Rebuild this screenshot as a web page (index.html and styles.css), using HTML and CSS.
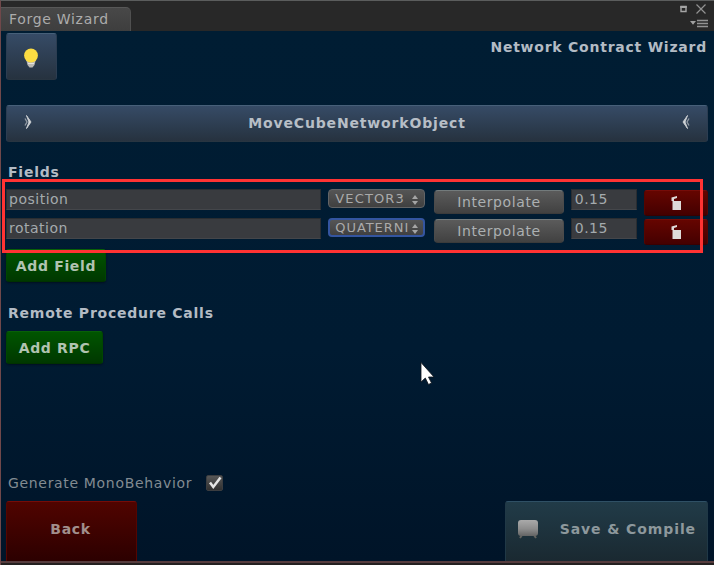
FILE: index.html
```html
<!DOCTYPE html>
<html lang="en">
<head>
<meta charset="utf-8">
<title>Forge Wizard</title>
<link rel="stylesheet" href="styles.css">
</head>
<body>
<div class="window">
  <header class="titlebar">
    <div class="tab"><span>Forge Wizard</span></div>
    <svg class="controls" width="30" height="28" viewBox="0 0 30 28" fill="none">
      <path d="M2 5.500h5v5H2z" stroke="#a5a5a5" stroke-width="1.4"/><path d="M1.300 6h6.400" stroke="#a5a5a5" stroke-width="2"/>
      <path d="M17.500 3.500l9 9m0-9l-9 9" stroke="#929292" stroke-width="1.2"/>
      <path d="M11 20h6l-3 3.700z" fill="#a0a0a0"/>
      <path d="M18 19.500h11M18 22.500h11M18 25.500h11" stroke="#929292" stroke-width="1.7"/>
    </svg>
  </header>
  <main class="content">
    <div class="top">
      <button class="btn blue bulb">
        <svg width="20" height="24" viewBox="0 0 20 24">
          <path d="M4.500 11h11l-2 8-2 2.500h-3l-2-2.500z" fill="#b9b8b4"/>
          <path d="M7 17.500h6" stroke="#e5e4de"/>
          <circle cx="10" cy="9.500" r="6.900" fill="#fbdc42"/>
        </svg>
      </button>
      <h1>Network Contract Wizard</h1>
    </div>
    <button class="btn blue name">
      <svg width="10" height="16" viewBox="0 0 10 16" fill="none"><path d="M3.500 1.500L8 8L3.500 14.500L6 8z" fill="#d6dade" stroke="#c6cace"/><path d="M2 4.500l2 3.500-2 3.500" stroke="#929ba5" stroke-width="1.300"/></svg>
      <span>MoveCubeNetworkObject</span>
      <svg class="flip" width="10" height="16" viewBox="0 0 10 16" fill="none"><path d="M3.500 1.500L8 8L3.500 14.500L6 8z" fill="#d6dade" stroke="#c6cace"/><path d="M2 4.500l2 3.500-2 3.500" stroke="#929ba5" stroke-width="1.300"/></svg>
    </button>
    <h2 class="fields-title">Fields</h2>
    <section class="fields">
      <div class="row">
        <div class="input">position</div>
        <div class="select"><span>VECTOR3</span><svg width="6" height="10" viewBox="0 0 6 10"><path d="M0 4l3-4 3 4zM0 6h6l-3 4z" fill="#a5a5a5"/></svg></div>
        <button class="btn gray">Interpolate</button>
        <div class="input">0.15</div>
        <button class="btn red remove"><svg width="12" height="16" viewBox="0 0 12 16"><path d="M2.500 6H11v9H2.500z" fill="#dedbd8"/><path d="M1.500 6V2.500L7 1v2L4 4v2z" fill="#dedbd8"/></svg></button>
      </div>
      <div class="row">
        <div class="input">rotation</div>
        <div class="select focus"><span>QUATERNI</span><svg width="6" height="10" viewBox="0 0 6 10"><path d="M0 4l3-4 3 4zM0 6h6l-3 4z" fill="#a5a5a5"/></svg></div>
        <button class="btn gray">Interpolate</button>
        <div class="input">0.15</div>
        <button class="btn red remove"><svg width="12" height="16" viewBox="0 0 12 16"><path d="M2.500 6H11v9H2.500z" fill="#dedbd8"/><path d="M1.500 6V2.500L7 1v2L4 4v2z" fill="#dedbd8"/></svg></button>
      </div>
      <div class="highlight"></div>
    </section>
    <button class="btn green add-field">Add Field</button>
    <h2 class="rpc-title">Remote Procedure Calls</h2>
    <button class="btn green add-rpc">Add RPC</button>
    <div class="generate">
      <span>Generate MonoBehavior</span>
      <div class="check"><svg width="17" height="16" viewBox="0 0 17 16" fill="none"><path d="M4 7.500L7.300 12L14.500 2.500" stroke="#e4e4e4" stroke-width="2.500"/></svg></div>
    </div>
    <footer class="actions">
      <button class="btn red back">Back</button>
      <button class="btn teal save">
        <svg width="22" height="20" viewBox="0 0 22 20"><defs><linearGradient id="metal" x2="0" y2="1"><stop stop-color="#aaa"/><stop offset=".55" stop-color="#8d8d8d"/><stop offset="1" stop-color="#646464"/></linearGradient></defs><path d="M5 16l-2 3M17 16l2 3" stroke="#62635f" stroke-width="2"/><rect x="1" y="1" width="20" height="16" rx="3" fill="url(#metal)"/></svg>
        <span>Save &amp; Compile</span>
      </button>
    </footer>
  </main>
  <svg class="cursor" width="18" height="26" viewBox="0 0 18 26"><path d="M2 1.500V21l4.300-4 3.200 6.500 3-1.500-3-6H15z" fill="#fff" stroke="#10151c" stroke-width=".8"/></svg>
</div>
</body>
</html>
```
FILE: styles.css
```css
* { box-sizing: border-box; }
body { margin: 0; font: 14px/18px "DejaVu Sans", sans-serif; color: #a4aab0; }
button { font: inherit; color: inherit; padding: 0; margin: 0; letter-spacing: inherit; }
h1, h2 { margin: 0; font-size: 14px; line-height: 18px; font-weight: bold; color: #b3bbc4; letter-spacing: .76px; }
svg { flex: none; display: block; }
.window { position: relative; width: 714px; height: 565px; overflow: hidden; display: flex; flex-direction: column; background: #242020; border-top: 1px solid #5b5d5d; border-left: 1px solid #70484a; }
.titlebar { height: 30px; flex: none; display: flex; justify-content: space-between; align-items: flex-end; padding-right: 5px; background: #282828; }
.tab { width: 130px; height: 24px; padding: 2px 0 0 8px; border-radius: 0 5px 0 0; background: linear-gradient(#484848, #3e3e3e); border-top: 1px solid #585858; border-right: 1px solid #505050; color: #acacac; white-space: nowrap; letter-spacing: .7px; }
.controls { align-self: flex-start; }
.content { height: 532px; flex: none; display: flex; flex-direction: column; align-items: flex-start; padding: 2px 5px 0; background: linear-gradient(#001d33 0%, #001b32 60%, #001428 100%); border-bottom: 2px solid #563c3e; }
.btn { border: 1px solid; border-radius: 3px; display: flex; align-items: center; justify-content: center; white-space: nowrap; }
.blue { background: linear-gradient(#364b66, #26323f); border-color: #476079 #2c3d51 #283541; }
.green { background: linear-gradient(#005500, #003800); border-color: #086008 #004600 #003200; color: #b1c3b1; font-weight: bold; letter-spacing: .65px; box-shadow: 0 1px 2px #001020; }
.red { background: linear-gradient(#650500, #440000); border-color: #760c08 #550500 #390000; }
.gray { background: linear-gradient(#5b5b5b, #414141); border-color: #737b7c #4b4b4b #3b3b3b; border-radius: 4px; color: #acb0b2; height: 24px; margin: 1px 0 0 1px; padding-left: 1px; letter-spacing: .6px; }
.teal { background: linear-gradient(#213b48, #1a2931); border-color: #2f5065 #203846 #1a2931; }
.top { width: 702px; height: 72px; display: flex; justify-content: space-between; align-items: flex-start; }
.bulb { width: 51px; height: 47px; padding: 3px 1px 0 0; }
.top h1 { padding: 5px 1px 0 0; }
.name { width: 702px; height: 37px; justify-content: space-between; padding: 0 16px; color: #b7bec6; font-weight: bold; letter-spacing: .84px; }
.name span { margin-top: -1px; }
.name svg { margin-bottom: 4px; }
.flip { transform: scaleX(-1); }
.fields-title { margin: 21px 0 0 2px; }
.fields { position: relative; width: 702px; height: 60px; margin-top: 8px; display: grid; grid-auto-rows: 29px; }
.row { display: grid; grid-template-columns: 315px 97px 131px 66px 64px; column-gap: 7.250px; align-items: start; }
.input { height: 21px; padding: 0 0 0 2px; line-height: 19px; background: #393b3f; border: 1px solid #2a2d31; border-bottom-color: #44464a; color: #a4aaad; letter-spacing: .5px; }
.input:nth-child(4) { padding-left: 3px; }
.select { height: 19px; padding: 0 6px; display: flex; align-items: center; justify-content: space-between; border: 1px solid #626466; border-radius: 4px; background: linear-gradient(#555, #404040); font-size: 13px; line-height: 17px; color: #aaa; letter-spacing: 1.150px; }
.select span { flex: none; white-space: nowrap; }
.select svg { margin-top: 2px; }
.focus { border: 2px solid #3455a0; padding: 0 5px; letter-spacing: .95px; }
.remove { height: 26px; margin-top: 1px; }
.highlight { position: absolute; left: -4px; top: -10px; width: 701px; height: 74px; border: 3px solid #ff3333; }
.add-field { width: 100px; height: 33px; padding-top: 1px; }
.rpc-title { margin: 22px 0 0 2px; }
.add-rpc { width: 97px; height: 33px; margin-top: 9px; }
.generate { height: 18px; margin: 110px 0 0 2px; display: flex; align-items: center; color: #828b92; letter-spacing: .67px; }
.generate span { width: 198px; flex: none; white-space: nowrap; }
.check { flex: none; width: 17px; height: 16px; border: 1px solid #3b3d40; border-radius: 2px; background: linear-gradient(#575757, #303030); display: flex; align-items: center; justify-content: center; }
.actions { width: 702px; margin-top: auto; display: flex; justify-content: space-between; font-weight: bold; color: #8d989c; }
.back { width: 131px; height: 60px; border-bottom: 0; border-radius: 3px 3px 0 0; color: #a18f8c; background: linear-gradient(#500400, #2c0000); padding: 0 2px 5px 0; letter-spacing: .65px; }
.save { width: 203px; height: 60px; border-bottom: 0; border-radius: 3px 3px 0 0; justify-content: space-between; padding: 0 11px 5px 11px; letter-spacing: .9px; }
.cursor { position: absolute; left: 418px; top: 360px; }
```
